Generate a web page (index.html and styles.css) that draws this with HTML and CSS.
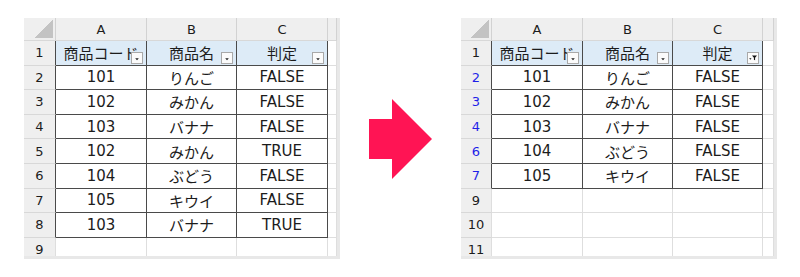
FILE: index.html
```html
<!DOCTYPE html>
<html lang="ja">
<head>
    <meta charset="UTF-8">
    <meta name="viewport" content="width=device-width, initial-scale=1.0">
    <title>フィルター前後</title>
    <link rel="stylesheet" href="styles.css">
</head>
<body>
<div class="page">

    <!-- before: full list -->
    <div class="sheet">
        <div class="sheet-inner">
            <table class="grid left">
                <colgroup><col class="w-rn"><col class="w-a"><col class="w-b"><col class="w-c"><col class="w-d"></colgroup>
                <tr class="col-hd">
                    <th class="corner"></th><th>A</th><th>B</th><th>C</th><th></th>
                </tr>
                <tr class="head">
                    <th class="rn in">1</th>
                    <td class="t">商品コード<span class="dd"><svg viewBox="0 0 12 12"><path d="M3.8 6.3h4.4l-2.2 2.4z" fill="#222"/></svg></span></td>
                    <td class="t">商品名<span class="dd"><svg viewBox="0 0 12 12"><path d="M3.8 6.3h4.4l-2.2 2.4z" fill="#222"/></svg></span></td>
                    <td class="t">判定<span class="dd"><svg viewBox="0 0 12 12"><path d="M3.8 6.3h4.4l-2.2 2.4z" fill="#222"/></svg></span></td>
                    <td></td>
                </tr>
                <tr><th class="rn in">2</th><td class="t">101</td><td class="t">りんご</td><td class="t">FALSE</td><td></td></tr>
                <tr><th class="rn in">3</th><td class="t">102</td><td class="t">みかん</td><td class="t">FALSE</td><td></td></tr>
                <tr><th class="rn in">4</th><td class="t">103</td><td class="t">バナナ</td><td class="t">FALSE</td><td></td></tr>
                <tr><th class="rn in">5</th><td class="t">102</td><td class="t">みかん</td><td class="t">TRUE</td><td></td></tr>
                <tr><th class="rn in">6</th><td class="t">104</td><td class="t">ぶどう</td><td class="t">FALSE</td><td></td></tr>
                <tr><th class="rn in">7</th><td class="t">105</td><td class="t">キウイ</td><td class="t">FALSE</td><td></td></tr>
                <tr><th class="rn in">8</th><td class="t">103</td><td class="t">バナナ</td><td class="t">TRUE</td><td></td></tr>
                <tr class="last"><th class="rn">9</th><td></td><td></td><td></td><td></td></tr>
            </table>
        </div>
    </div>

    <svg class="arrow" width="63" height="80" viewBox="0 0 63 80">
        <polygon points="0,20 23,20 23,0 63,40 23,80 23,60 0,60" fill="#ff1454"/>
    </svg>

    <!-- after: 判定 = FALSE -->
    <div class="sheet">
        <div class="sheet-inner">
            <table class="grid right">
                <colgroup><col class="w-rn2"><col class="w-a"><col class="w-b2"><col class="w-c2"><col class="w-d2"></colgroup>
                <tr class="col-hd">
                    <th class="corner"></th><th>A</th><th>B</th><th>C</th><th></th>
                </tr>
                <tr class="head">
                    <th class="rn in">1</th>
                    <td class="t">商品コード<span class="dd"><svg viewBox="0 0 12 12"><path d="M3.8 6.3h4.4l-2.2 2.4z" fill="#222"/></svg></span></td>
                    <td class="t">商品名<span class="dd"><svg viewBox="0 0 12 12"><path d="M3.8 6.3h4.4l-2.2 2.4z" fill="#222"/></svg></span></td>
                    <td class="t">判定<span class="dd"><svg viewBox="0 0 12 12"><path d="M4.8 3h6l-2.3 2.8v3l-1.4-.8v-2.2z" fill="#111"/><path d="M1.4 6.2h2.8l-1.4 1.8z" fill="#111"/></svg></span></td>
                    <td></td>
                </tr>
                <tr><th class="rn in hit">2</th><td class="t">101</td><td class="t">りんご</td><td class="t">FALSE</td><td></td></tr>
                <tr><th class="rn in hit">3</th><td class="t">102</td><td class="t">みかん</td><td class="t">FALSE</td><td></td></tr>
                <tr><th class="rn in hit">4</th><td class="t">103</td><td class="t">バナナ</td><td class="t">FALSE</td><td></td></tr>
                <tr><th class="rn in hit">6</th><td class="t">104</td><td class="t">ぶどう</td><td class="t">FALSE</td><td></td></tr>
                <tr><th class="rn in hit">7</th><td class="t">105</td><td class="t">キウイ</td><td class="t">FALSE</td><td></td></tr>
                <tr><th class="rn">9</th><td></td><td></td><td></td><td></td></tr>
                <tr><th class="rn">10</th><td></td><td></td><td></td><td></td></tr>
                <tr class="last"><th class="rn">11</th><td></td><td></td><td></td><td></td></tr>
            </table>
        </div>
    </div>

</div>
</body>
</html>
```

FILE: styles.css
```css
body {
    margin: 0;
    background: #fff;
    font-family: "DejaVu Sans", "Noto Sans CJK JP", sans-serif;
    color: #1c1c1c;
}
.page {
    display: flex;
    align-items: center;
    gap: 29px;
    padding: 18px 0 0 24px;
}
.sheet {
    width: 316px;
    height: 241px;
    box-sizing: border-box;
    padding: 0 3px 3px 0;
    background: #e8e8e8;
}
.sheet-inner {
    width: 313px;
    height: 238px;
    overflow: hidden;
    background: #fff;
}
.grid {
    border-collapse: separate;
    border-spacing: 0;
    table-layout: fixed;
    width: 313px;
}
.w-rn { width: 32px; }
.w-a { width: 91px; }
.w-b { width: 90px; }
.w-c { width: 91px; }
.w-d { width: 9px; }
.w-rn2 { width: 31px; }
.w-b2 { width: 90px; }
.w-c2 { width: 90px; }
.w-d2 { width: 11px; }

.grid th, .grid td {
    box-sizing: border-box;
    padding: 0;
    border-right: 1px solid #dedede;
    border-bottom: 1px solid #dedede;
    text-align: center;
    vertical-align: middle;
    overflow: hidden;
    white-space: nowrap;
}
.grid tr {
    height: 24.6px;
}
/* bottom row is only partly visible */
.grid tr.last {
    height: 18px;
}
.grid tr.last th {
    padding-top: 4px;
}
.grid td {
    font-size: 15px;
}
.col-hd {
    height: 23px !important;
}
.col-hd th {
    background: #efefef;
    border-right-color: #d2d2d2;
    border-bottom-color: #d8d8d8;
    font-weight: normal;
    font-size: 13px;
    color: #1c1c1c;
}
.corner {
    background: #efefef linear-gradient(to bottom right, transparent 50%, #c3c3c3 50%) no-repeat right 2px bottom 2px / 19px 18px !important;
}
.rn {
    background: #efefef;
    font-weight: normal;
    font-size: 13px;
    color: #1c1c1c;
    border-bottom-color: #d8d8d8 !important;
}
.rn.in {
    border-right-color: #4a4a4a;
}
.rn.hit {
    color: #1f1fe8;
}
.t {
    border-right-color: #4a4a4a !important;
    border-bottom-color: #4a4a4a !important;
}
.head .t {
    position: relative;
    background: #ddebf7;
    overflow: visible;
}
.dd {
    position: absolute;
    right: 3px;
    bottom: 1px;
    width: 12px;
    height: 12px;
    box-sizing: border-box;
    background: #fbfbfb;
    border: 1px solid #a9a9a9;
}
.dd svg {
    display: block;
    width: 10px;
    height: 10px;
}
.arrow {
    flex: none;
    display: block;
}
```
